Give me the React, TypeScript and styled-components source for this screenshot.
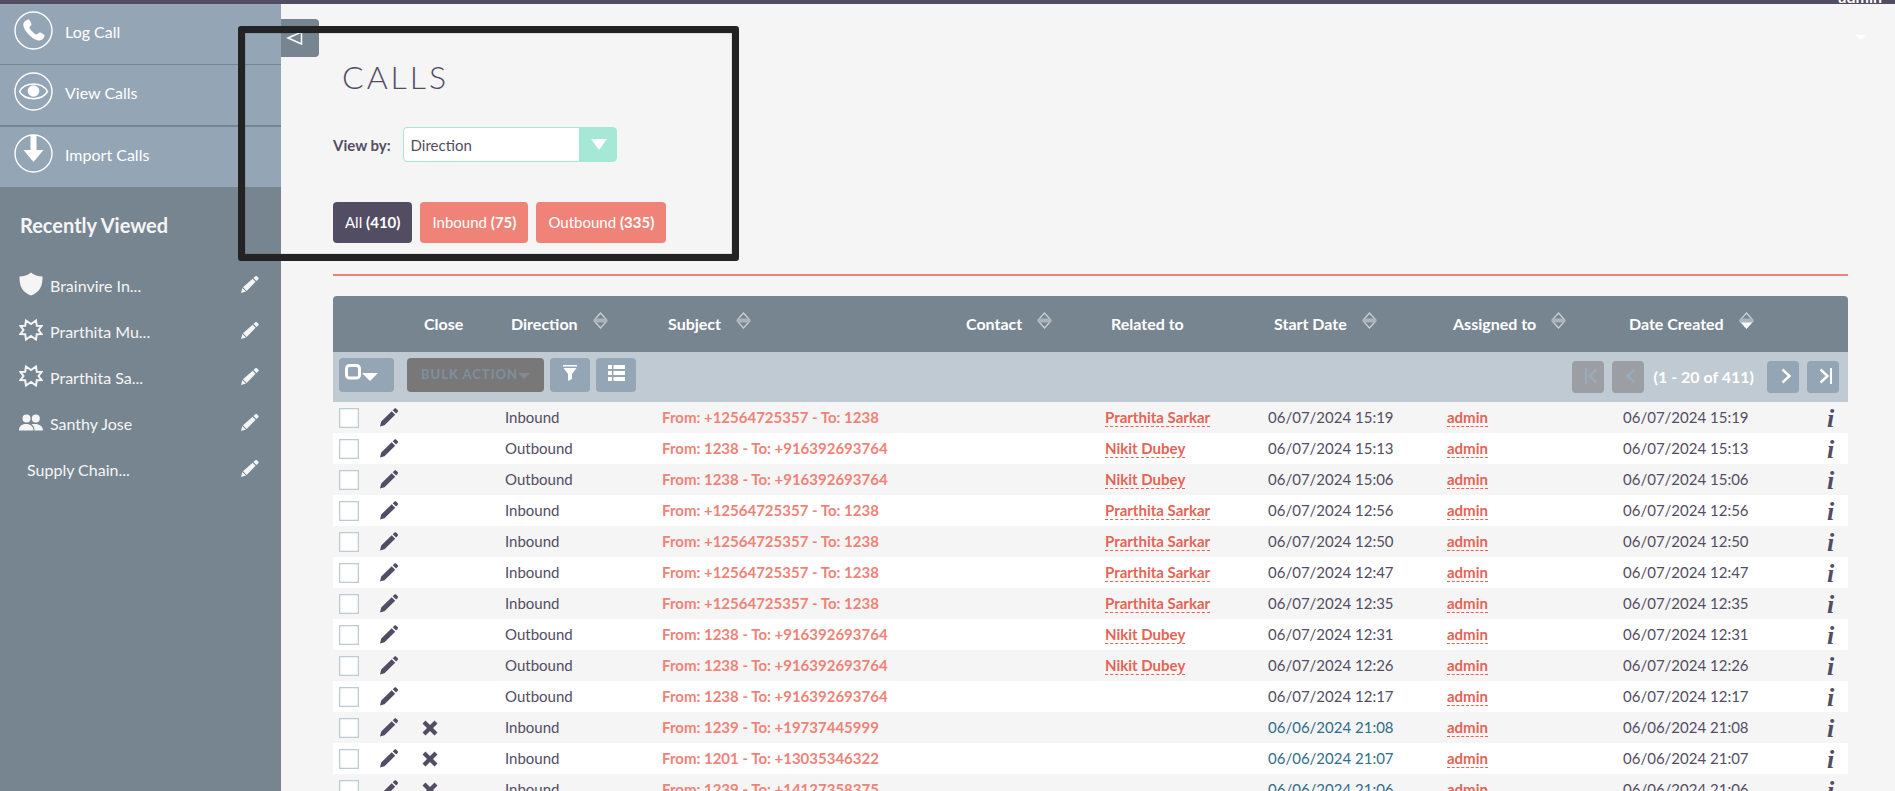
import React from 'react';
import styled, { createGlobalStyle, css } from 'styled-components';

const color = {
  ink: '#534d64',
  slate: '#778591',
  steel: '#94a5b5',
  mist: '#bfcad3',
  page: '#f5f5f5',
  coral: '#f08377',
  link: '#e56455',
  mint: '#a5e8d6',
};

const GlobalStyle = createGlobalStyle`
  * { box-sizing: border-box; }
  body {
    margin: 0;
    background: ${color.page};
    color: ${color.ink};
    font-family: Lato, 'Liberation Sans', sans-serif;
    font-size: 15px;
    line-height: 20px;
  }
  a { color: inherit; text-decoration: none; }
  button { font: inherit; border: 0; padding: 0; cursor: pointer; }
  svg { display: block; flex: none; }
`;

const Shell = styled.div`
  position: relative;
  display: flex;
  flex-direction: column;
  height: 100vh;
  overflow: hidden;
`;

const TopBar = styled.header`
  display: flex;
  justify-content: flex-end;
  align-items: flex-end;
  flex: none;
  height: 4px;
  padding-right: 13px;
  background: ${color.ink};
`;

const UserMenu = styled.a`
  position: relative;
  color: #fff;
  font-size: 16px;
  font-weight: 700;
  line-height: 14px;
`;

const UserCaret = styled.svg`
  position: absolute;
  right: 16px;
  top: 45px;
`;

const Body = styled.div`
  display: flex;
  flex: 1;
  min-height: 0;
`;

const Sidebar = styled.aside`
  flex: none;
  width: 281px;
  background: ${color.slate};
  color: #fff;
`;

const ActionNav = styled.nav`
  display: flex;
  flex-direction: column;
  gap: 1px;
`;

const ActionLink = styled.a`
  display: flex;
  align-items: center;
  gap: 12px;
  height: 60px;
  padding: 0 14px 8px;
  background: ${color.steel};
  font-size: 16px;
  line-height: 20px;
  span { padding-top: 3px; }
  &:last-child { margin-top: 1px; }
`;

const SidebarTitle = styled.h2`
  margin: 0;
  padding: 26px 20px 24px;
  color: ${color.page};
  font-size: 20px;
  line-height: 24px;
`;

const RecentList = styled.ul`
  margin: 0;
  padding: 0;
  list-style: none;
`;

const RecentItem = styled.li<{ $plain?: boolean }>`
  display: flex;
  align-items: center;
  gap: 7px;
  height: 46px;
  padding: 0 22px 0 ${(p) => (p.$plain ? 27 : 19)}px;
  color: ${color.page};
  font-size: 16px;
`;

const RecentName = styled.a`
  flex: 1;
  padding-top: 3px;
`;

const BareButton = styled.button`
  display: inline-flex;
  background: none;
  color: inherit;
  vertical-align: middle;
`;

const Content = styled.main`
  flex: 1;
  min-width: 0;
  position: relative;
  padding: 51px 47px 0 52px;
`;

const CollapseButton = styled.button`
  position: absolute;
  left: 0;
  top: 15px;
  display: flex;
  align-items: center;
  width: 38px;
  height: 38px;
  padding-left: 5px;
  border-radius: 0 4px 4px 0;
  background: ${color.slate};
`;

const PageTitle = styled.h1`
  margin: 0;
  padding-left: 9px;
  font-size: 32px;
  font-weight: 300;
  line-height: 44px;
  letter-spacing: 3px;
`;

const ViewBy = styled.div`
  display: flex;
  align-items: center;
  gap: 12px;
  margin-top: 28px;
  label { font-weight: 700; }
`;

const SelectFrame = styled.div`
  position: relative;
  width: 214px;
  height: 35px;
  svg { position: absolute; right: 10px; top: 12px; pointer-events: none; }
`;

const Select = styled.select`
  appearance: none;
  width: 100%;
  height: 100%;
  padding: 0 44px 0 7px;
  border: 1px solid ${color.mint};
  border-radius: 4px;
  background: linear-gradient(${color.mint}, ${color.mint}) right / 37px 100% no-repeat #fff;
  color: ${color.ink};
  font: inherit;
`;

const FilterBar = styled.div`
  display: flex;
  gap: 8px;
  margin-top: 40px;
  padding-bottom: 31px;
  border-bottom: 2px solid ${color.coral};
`;

const FilterButton = styled.button<{ $active?: boolean }>`
  height: 41px;
  padding: 0 12px 2px;
  border-radius: 4px;
  background: ${(p) => (p.$active ? color.ink : color.coral)};
  color: #fff;
`;

const CallTable = styled.table`
  width: 100%;
  margin-top: 20px;
  table-layout: fixed;
  border-collapse: separate;
  border-spacing: 0;
`;

const Col = styled.col<{ $w?: number }>`
  ${(p) => p.$w && css`width: ${p.$w}px;`}
`;

const HeadRow = styled.tr`
  height: 56px;
  th {
    padding: 0 0 0 12px;
    background: ${color.slate};
    color: #fff;
    text-align: left;
    font-size: 16px;
    font-weight: 700;
    white-space: nowrap;
  }
  th:first-child { border-top-left-radius: 4px; }
  th:last-child { border-top-right-radius: 4px; }
`;

const HeadLabel = styled.span`
  display: flex;
  align-items: center;
  gap: 15px;
  svg { margin-bottom: 8px; }
`;

const ToolCell = styled.td`
  height: 50px;
  padding: 0 9px 0 6px;
  background: ${color.mist};
`;

const Tools = styled.div`
  display: flex;
  align-items: center;
  justify-content: space-between;
`;

const ToolGroup = styled.div<{ $gap: number }>`
  display: flex;
  align-items: center;
  gap: ${(p) => p.$gap}px;
`;

const ToolButton = styled.button<{ $w: number }>`
  display: flex;
  align-items: center;
  justify-content: center;
  width: ${(p) => p.$w}px;
  height: 34px;
  margin-bottom: 4px;
  padding-bottom: 4px;
  border-radius: 4px;
  background: ${color.steel};
`;

const SelectAllButton = styled(ToolButton)`
  justify-content: flex-start;
  padding-left: 6px;
`;

const BulkButton = styled(ToolButton)`
  margin-left: 7px;
  padding-bottom: 2px;
  background: #787878;
  color: #7f8f9d;
  font-size: 13px;
  font-weight: 700;
  letter-spacing: 1px;
  svg { margin-top: 4px; }
`;

const PageButton = styled.button`
  display: flex;
  align-items: center;
  justify-content: center;
  width: 32px;
  height: 32px;
  padding: 0 0 2px 6px;
  border-radius: 4px;
  background: ${color.steel};
  color: #fff;
  &:disabled { background: #9b9fa3; color: #9aabb9; }
`;

const PageCount = styled.span`
  padding: 0 5px 0 2px;
  color: #fff;
  font-size: 16px;
  font-weight: 700;
`;

const CallRow = styled.tr`
  height: 31px;
  background: #fff;
  &:nth-child(odd) { background: ${color.page}; }
  td { padding: 0 0 2px 6px; white-space: nowrap; }
`;

const IconCell = styled.td<{ $inset?: boolean }>`
  && { padding: ${(p) => (p.$inset ? '0 0 0 10px' : '0 0 0 6px')}; }
  line-height: 0;
`;

const Check = styled.input`
  appearance: none;
  display: block;
  width: 20px;
  height: 20px;
  margin: 1px 0 0;
  border: 1px solid ${color.mist};
  background: #fff;
  box-shadow: inset 0 0 2px ${color.mist};
`;

const SubjectLink = styled.a`
  color: ${color.coral};
  font-weight: 700;
`;

const RelatedLink = styled.a`
  border-bottom: 1px dashed ${color.link};
  color: ${color.link};
  font-weight: 700;
`;

const StartDate = styled.td<{ $past: boolean }>`
  color: ${(p) => (p.$past ? '#2f6d8c' : 'inherit')};
`;

const InfoButton = styled.button`
  display: block;
  margin: 2px 0 0 21px;
  background: none;
  color: ${color.ink};
  font: italic 700 26px/26px 'Liberation Serif', serif;
`;

const Highlight = styled.div`
  position: absolute;
  left: 238px;
  top: 26px;
  width: 501px;
  height: 235px;
  border: 7px solid #232323;
  border-radius: 3px;
  box-shadow: inset 0 0 1px #232323;
  pointer-events: none;
`;

const Ring = ({ children }: { children: React.ReactNode }) => (
  <svg width="39" height="39" viewBox="0 0 39 39" fill="#fff">
    <circle cx="19.5" cy="19.5" r="18.5" fill="none" stroke="#fff" strokeWidth="1.4" />
    {children}
  </svg>
);

const PhoneIcon = () => (
  <Ring>
    <path d="M14.600 8.600c1 0 2.900 3.600 2.900 4.900 0 1.200-2.100 1.900-2.100 3 0 1.600 5.400 7 7.200 7 1.100 0 1.700-2.100 3-2.100 1.200 0 5 2 5 3.100 0 1.900-2.500 5-5.200 5C19.300 29.500 9.300 19.500 9.300 13.700c0-2.600 3.300-5.100 5.300-5.100z" />
  </Ring>
);

const EyeIcon = () => (
  <Ring>
    <path d="M5.500 19.500C11 9.500 28 9.500 33.500 19.500 28 29 11 29 5.500 19.500z" fill="none" stroke="#fff" strokeWidth="1.500" />
    <circle cx="19.500" cy="19" r="5.800" />
  </Ring>
);

const ImportIcon = () => (
  <Ring>
    <path d="M16.500 1h6v15h7L19.500 28 9.500 16h7z" />
  </Ring>
);

const Pencil = () => (
  <svg width="18" height="17" viewBox="0 0 18 17" fill="currentColor">
    <path d="M0 17l1.300-5 3.700 3.600zM2 11.200L11.600 2.700l3 3L5.700 14.900zM12.400 2l2-1.800c.5-.4 1-.3 1.500.1l1.500 1.400c.4.500.4 1 0 1.500L15.500 5z" />
  </svg>
);

const RowPencil = () => (
  <svg width="18" height="19" viewBox="0 0 18 19" fill="currentColor">
    <path d="M0 18.500l1.200-4.900L11.700 3.300l3.500 3.500L4.500 17.300zM12.700 2.300L14.300.7c.7-.6 1.300-.6 2 0l1.300 1.400c.6.700.6 1.200 0 1.800L16.100 5.600z" />
  </svg>
);

const Shield = () => (
  <svg width="24" height="24" viewBox="0 0 24 24" fill="currentColor">
    <path d="M12 .5c3 2.600 7 3.800 11.500 4C23.800 14 20.500 20.500 12 23.500 3.500 20.500.2 14 .5 4.500 5 4.300 9 3.100 12 .5z" />
  </svg>
);

const Burst = () => (
  <svg width="24" height="24" viewBox="0 0 24 24" fill="none" stroke="currentColor" strokeWidth="2">
    <path d="M7 2.500l5 3.500 5-3.500.8 5.200 4.700.3-3 4 3 4-4.700.3-.8 5.200-5-3.500-5 3.500-.8-5.200-4.700-.3 3-4-3-4 4.700-.3z" />
  </svg>
);

const People = () => (
  <svg width="24" height="17" viewBox="0 0 24 17" fill="currentColor">
    <circle cx="7.500" cy="4.500" r="4" />
    <circle cx="16.800" cy="4.500" r="4" />
    <path d="M0 16.500c0-4 2.500-6.500 7-6.500s7.500 2.500 7.500 6.500zM12.500 10.300c6-1.400 11.500.7 11.500 6.200h-8.500c0-2.800-1-4.800-3-6.200z" />
  </svg>
);

const SortIcon = ({ desc }: { desc?: boolean }) => (
  <svg width="15" height="17" viewBox="0 0 15 17" stroke="#c9d1d5" strokeWidth="1.200">
    <path d="M.8 8.500L7.500 1l6.700 7.500" fill="none" />
    <path d="M.8 8.500L7.500 16l6.700-7.500" fill={desc ? '#fff' : 'none'} stroke={desc ? '#fff' : '#c9d1d5'} />
    <path d="M2 6.500h11l1.500 2-1.500 2H2l-1.500-2z" fill="#aab4ba" stroke="none" />
  </svg>
);

const Caret = ({ w = 16, h = 8, fill = '#fff' }: { w?: number; h?: number; fill?: string }) => (
  <svg width={w} height={h} viewBox="0 0 16 10" preserveAspectRatio="none" fill={fill}>
    <path d="M0 0h16L8 10z" />
  </svg>
);

const SelectAllIcon = () => (
  <svg width="34" height="18" viewBox="0 0 34 18">
    <rect x="1.500" y="1.500" width="13" height="12.500" rx="3" fill="none" stroke="#fff" strokeWidth="3" />
    <path d="M17 9h16l-8 8z" fill="#fff" />
  </svg>
);

const FunnelIcon = () => (
  <svg width="14" height="16" viewBox="0 0 14 16" fill="#fff">
    <path d="M0 0h14v1.500H0zM.5 3h13L9 9v5l-4 2V9z" />
  </svg>
);

const ListIcon = () => (
  <svg width="17" height="16" viewBox="0 0 17 16" fill="#fff">
    <path d="M0 0h4v4H0zM5.500 0H17v4H5.500zM0 6h4v4H0zM5.500 6H17v4H5.500zM0 12h4v4H0zM5.500 12H17v4H5.500z" />
  </svg>
);

const Chevron = ({ back, bar }: { back?: boolean; bar?: boolean }) => (
  <svg
    width={bar ? 14 : 10}
    height="16"
    viewBox={bar ? '0 0 14 16' : '0 0 10 16'}
    fill="none"
    stroke="currentColor"
    strokeWidth="2.400"
    transform={back ? 'scale(-1 1)' : undefined}
  >
    <path d="M1.500 1.500L8.500 8l-7 6.500" />
    {bar && <path d="M12 0v16" strokeWidth="2" />}
  </svg>
);

const CrossIcon = () => (
  <svg width="16" height="16" viewBox="0 0 16 16" fill="currentColor">
    <path d="M3.500.5L8 5 12.500.5 15.500 3.500 11 8l4.500 4.500-3 3L8 11l-4.500 4.500-3-3L5 8 .5 3.500z" />
  </svg>
);

const actions = [
  { label: 'Log Call', icon: <PhoneIcon /> },
  { label: 'View Calls', icon: <EyeIcon /> },
  { label: 'Import Calls', icon: <ImportIcon /> },
];

const recents = [
  { name: 'Brainvire In...', icon: <Shield /> },
  { name: 'Prarthita Mu...', icon: <Burst /> },
  { name: 'Prarthita Sa...', icon: <Burst /> },
  { name: 'Santhy Jose', icon: <People /> },
  { name: 'Supply Chain...', icon: null },
];

const filters = [
  { label: 'All', count: 410, active: true },
  { label: 'Inbound', count: 75 },
  { label: 'Outbound', count: 335 },
];

type Column = { label: string; width?: number; sort?: 'none' | 'desc' };

const columns: Column[] = [
  { label: '', width: 41 },
  { label: '', width: 38 },
  { label: 'Close', width: 87 },
  { label: 'Direction', width: 157, sort: 'none' },
  { label: 'Subject', sort: 'none' },
  { label: 'Contact', width: 145, sort: 'none' },
  { label: 'Related to', width: 163 },
  { label: 'Start Date', width: 179, sort: 'none' },
  { label: 'Assigned to', width: 176, sort: 'none' },
  { label: 'Date Created', width: 183, sort: 'desc' },
  { label: '', width: 48 },
];

type Call = {
  direction: string;
  from: string;
  to: string;
  related?: string;
  date: string;
  open?: boolean;
};

const inbound = { direction: 'Inbound', from: '+12564725357', to: '1238' };
const outbound = { direction: 'Outbound', from: '1238', to: '+916392693764' };

const calls: Call[] = [
  { ...inbound, related: 'Prarthita Sarkar', date: '06/07/2024 15:19' },
  { ...outbound, related: 'Nikit Dubey', date: '06/07/2024 15:13' },
  { ...outbound, related: 'Nikit Dubey', date: '06/07/2024 15:06' },
  { ...inbound, related: 'Prarthita Sarkar', date: '06/07/2024 12:56' },
  { ...inbound, related: 'Prarthita Sarkar', date: '06/07/2024 12:50' },
  { ...inbound, related: 'Prarthita Sarkar', date: '06/07/2024 12:47' },
  { ...inbound, related: 'Prarthita Sarkar', date: '06/07/2024 12:35' },
  { ...outbound, related: 'Nikit Dubey', date: '06/07/2024 12:31' },
  { ...outbound, related: 'Nikit Dubey', date: '06/07/2024 12:26' },
  { ...outbound, date: '06/07/2024 12:17' },
  { direction: 'Inbound', from: '1239', to: '+19737445999', date: '06/06/2024 21:08', open: true },
  { direction: 'Inbound', from: '1201', to: '+13035346322', date: '06/06/2024 21:07', open: true },
  { direction: 'Inbound', from: '1239', to: '+14127358375', date: '06/06/2024 21:06', open: true },
];

export default function App() {
  return (
    <Shell>
      <GlobalStyle />
      <TopBar>
        <UserMenu href="#user">
          admin
          <UserCaret width="11" height="5" viewBox="0 0 11 5" fill="#fff">
            <path d="M0 0h11L5.500 5z" />
          </UserCaret>
        </UserMenu>
      </TopBar>
      <Body>
        <Sidebar>
          <ActionNav>
            {actions.map((a) => (
              <ActionLink href="#action" key={a.label}>
                {a.icon}
                <span>{a.label}</span>
              </ActionLink>
            ))}
          </ActionNav>
          <SidebarTitle>Recently Viewed</SidebarTitle>
          <RecentList>
            {recents.map((r) => (
              <RecentItem key={r.name} $plain={!r.icon}>
                {r.icon}
                <RecentName href="#record">{r.name}</RecentName>
                <BareButton aria-label={`Edit ${r.name}`}>
                  <Pencil />
                </BareButton>
              </RecentItem>
            ))}
          </RecentList>
        </Sidebar>
        <Content>
          <CollapseButton aria-label="Collapse sidebar">
            <svg width="17" height="14" viewBox="0 0 17 14" fill="none" stroke="#fff" strokeWidth="1.500">
              <path d="M2 7l13.500-6v12z" />
            </svg>
          </CollapseButton>
          <PageTitle>CALLS</PageTitle>
          <ViewBy>
            <label htmlFor="view-by">View by:</label>
            <SelectFrame>
              <Select id="view-by" defaultValue="Direction">
                <option>Direction</option>
              </Select>
              <Caret w={16} h={11} />
            </SelectFrame>
          </ViewBy>
          <FilterBar>
            {filters.map((f) => (
              <FilterButton key={f.label} $active={f.active}>
                {f.label} <b>({f.count})</b>
              </FilterButton>
            ))}
          </FilterBar>
          <CallTable>
            <colgroup>
              {columns.map((c, i) => (
                <Col key={i} $w={c.width} />
              ))}
            </colgroup>
            <thead>
              <HeadRow>
                {columns.map((c, i) => (
                  <th key={i} scope="col">
                    <HeadLabel>
                      {c.label}
                      {c.sort && <SortIcon desc={c.sort === 'desc'} />}
                    </HeadLabel>
                  </th>
                ))}
              </HeadRow>
              <tr>
                <ToolCell colSpan={columns.length}>
                  <Tools>
                    <ToolGroup $gap={6}>
                      <SelectAllButton $w={55} aria-label="Select rows">
                        <SelectAllIcon />
                      </SelectAllButton>
                      <BulkButton $w={137} disabled>
                        BULK ACTION
                        <Caret w={12} h={6} fill="#858b91" />
                      </BulkButton>
                      <ToolButton $w={40} aria-label="Filter">
                        <FunnelIcon />
                      </ToolButton>
                      <ToolButton $w={40} aria-label="Choose columns">
                        <ListIcon />
                      </ToolButton>
                    </ToolGroup>
                    <ToolGroup $gap={8}>
                      <PageButton disabled aria-label="First page">
                        <Chevron back bar />
                      </PageButton>
                      <PageButton disabled aria-label="Previous page">
                        <Chevron back />
                      </PageButton>
                      <PageCount>(1 - 20 of 411)</PageCount>
                      <PageButton aria-label="Next page">
                        <Chevron />
                      </PageButton>
                      <PageButton aria-label="Last page">
                        <Chevron bar />
                      </PageButton>
                    </ToolGroup>
                  </Tools>
                </ToolCell>
              </tr>
            </thead>
            <tbody>
              {calls.map((c) => (
                <CallRow key={c.date}>
                  <IconCell>
                    <Check type="checkbox" aria-label={`Select call ${c.date}`} />
                  </IconCell>
                  <IconCell>
                    <BareButton aria-label="Edit call">
                      <RowPencil />
                    </BareButton>
                  </IconCell>
                  <IconCell $inset>
                    {c.open && (
                      <BareButton aria-label="Close call">
                        <CrossIcon />
                      </BareButton>
                    )}
                  </IconCell>
                  <td>{c.direction}</td>
                  <td>
                    <SubjectLink href="#call">
                      From: {c.from} - To: {c.to}
                    </SubjectLink>
                  </td>
                  <td />
                  <td>{c.related && <RelatedLink href="#related">{c.related}</RelatedLink>}</td>
                  <StartDate $past={!!c.open}>{c.date}</StartDate>
                  <td>
                    <RelatedLink href="#admin">admin</RelatedLink>
                  </td>
                  <td>{c.date}</td>
                  <IconCell>
                    <InfoButton aria-label="More information">i</InfoButton>
                  </IconCell>
                </CallRow>
              ))}
            </tbody>
          </CallTable>
        </Content>
      </Body>
      <Highlight />
    </Shell>
  );
}
